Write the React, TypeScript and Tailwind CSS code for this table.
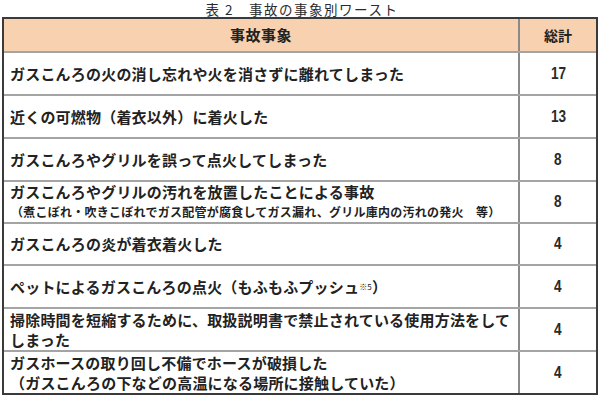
import React from "react";

const jp = '"Noto Sans CJK JP", "Noto Sans", sans-serif';
const num = '"Liberation Sans", "Noto Sans CJK JP", sans-serif';

type Row = { h: string; content: React.ReactNode; n: string };

const rows: Row[] = [
  { h: "h-[43px]", content: <div>ガスこんろの火の消し忘れや火を消さずに離れてしまった</div>, n: "17" },
  { h: "h-[43px]", content: <div>近くの可燃物（着衣以外）に着火した</div>, n: "13" },
  { h: "h-[43px]", content: <div>ガスこんろやグリルを誤って点火してしまった</div>, n: "8" },
  {
    h: "h-[42px]",
    content: (
      <div className="leading-[20px]">
        <div>ガスこんろやグリルの汚れを放置したことによる事故</div>
        <div className="text-[12px] pl-[1px] tracking-[0.25px]">（煮こぼれ・吹きこぼれでガス配管が腐食してガス漏れ、グリル庫内の汚れの発火　等）</div>
      </div>
    ),
    n: "8",
  },
  { h: "h-[42px]", content: <div>ガスこんろの炎が着衣着火した</div>, n: "4" },
  {
    h: "h-[43px]",
    content: (
      <div>
        ペットによるガスこんろの点火（もふもふプッシュ
        <sup className="text-[8px] relative -top-[3px] font-normal">※5</sup>）
      </div>
    ),
    n: "4",
  },
  {
    h: "h-[43px]",
    content: (
      <div className="leading-[20px]">
        <div>掃除時間を短縮するために、取扱説明書で禁止されている使用方法をして</div>
        <div>しまった</div>
      </div>
    ),
    n: "4",
  },
  {
    h: "h-[43px]",
    content: (
      <div className="leading-[20px]">
        <div>ガスホースの取り回し不備でホースが破損した</div>
        <div>（ガスこんろの下などの高温になる場所に接触していた）</div>
      </div>
    ),
    n: "4",
  },
];

export default function App() {
  return (
    <div className="w-[600px] h-[412px] bg-white text-[#222222] overflow-hidden" style={{ fontFamily: jp }}>
      <div className="h-[17px] pt-[1px] text-center text-[13.5px] leading-[16px] tracking-[1.5px] text-[#2a2a2a] pl-[4px]">
        表 2　事故の事象別ワースト
      </div>
      <div className="ml-[2px] w-[596px] border-2 border-[#3a3a3a]">
        <div className="grid grid-cols-[514px_1fr] h-[32px] bg-[#f8d2b0] font-bold text-[15px]">
          <div className="flex items-center justify-center tracking-[0.5px]">事故事象</div>
          <div className="flex items-center justify-center border-l-2 border-[#8a8a8a] text-[14px]">総計</div>
        </div>
        {rows.map((r, i) => (
          <div key={i} className={`grid grid-cols-[514px_1fr] border-t-2 border-[#a4a4a4] ${r.h}`}>
            <div className="flex items-center pl-[6px] text-[15px] font-bold leading-[20px] whitespace-nowrap tracking-[0.2px]">
              {r.content}
            </div>
            <div className="flex items-center justify-center border-l-2 border-[#8a8a8a]">
              <span className="inline-block text-[17px] font-bold scale-x-80 text-[#2a2a2a]" style={{ fontFamily: num }}>
                {r.n}
              </span>
            </div>
          </div>
        ))}
      </div>
    </div>
  );
}
